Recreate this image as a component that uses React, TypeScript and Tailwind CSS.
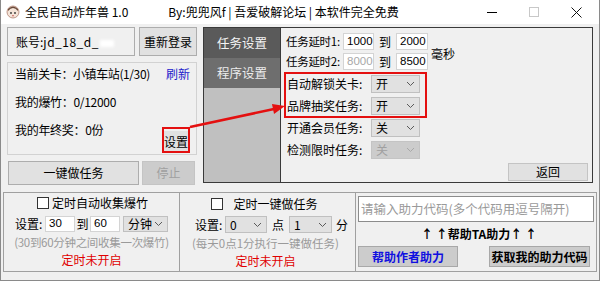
import React from "react";

const font = "font-['Noto_Sans_CJK_SC','Microsoft_YaHei',sans-serif]";

function Chevron({ color = "#606060" }: { color?: string }) {
  return (
    <svg width="9" height="6" viewBox="0 0 9 6">
      <polyline points="1,1 4.5,4.5 8,1" fill="none" stroke={color} strokeWidth="1" />
    </svg>
  );
}

function Select({ value, w, disabled }: { value: string; w: string; disabled?: boolean }) {
  return (
    <div
      className={`${w} h-full flex items-center justify-between pl-[4px] pr-[4px] border ${
        disabled ? "bg-[#cccccc] border-[#c4c4c4] text-[#a0a0a0]" : "bg-[#e1e1e1] border-[#c0c0c0] text-black"
      }`}
    >
      <span className="leading-none">{value}</span>
      <Chevron color={disabled ? "#a8a8a8" : "#5a5a5a"} />
    </div>
  );
}

function Input({ value, w, dim }: { value: string; w: string; dim?: boolean }) {
  return (
    <div
      className={`${w} h-full flex items-center pl-[3px] bg-white border border-[#d4d4d4] font-['Liberation_Sans',sans-serif] text-[11.5px] ${
        dim ? "text-[#a8a8a8]" : "text-black"
      }`}
    >
      {value}
    </div>
  );
}

function TitleBar() {
  return (
    <div className="h-[24px] bg-white flex items-center text-[12px]">
      <svg width="14" height="14" viewBox="0 0 14 14" className="ml-[5px]">
        <circle cx="7" cy="7" r="6" fill="#f4e4d8" stroke="#b08070" strokeWidth="0.8" />
        <path d="M2 6 Q7 0 12 6 L12 4 Q7 -1 2 4 Z" fill="#6a4a3a" />
        <circle cx="5" cy="8" r="0.9" fill="#333" />
        <circle cx="9" cy="8" r="0.9" fill="#333" />
        <path d="M6 10.5 Q7 11.5 8 10.5" stroke="#c04040" strokeWidth="0.8" fill="none" />
      </svg>
      <span className="ml-[5px] leading-none">全民自动炸年兽 1.0</span>
      <span className="ml-[40px] leading-none">By:兜兜风f | 吾爱破解论坛 | 本软件完全免费</span>
      <div className="ml-auto flex items-center h-full">
        <div className="w-[46px] flex justify-center">
          <div className="w-[10px] h-[1px] bg-black" />
        </div>
        <div className="w-[38px] flex justify-center">
          <div className="w-[10px] h-[10px] border border-[#c8c8c8]" />
        </div>
        <div className="w-[46px] flex justify-center">
          <svg width="11" height="11" viewBox="0 0 11 11">
            <path d="M0.5 0.5 L10.5 10.5 M10.5 0.5 L0.5 10.5" stroke="#111" strokeWidth="1" />
          </svg>
        </div>
      </div>
    </div>
  );
}

export default function App() {
  return (
    <div
      className={`relative w-[600px] h-[281px] overflow-hidden whitespace-nowrap bg-[#f0f0f0] border-x border-b border-[#8a8a8a] text-[12px] text-black ${font}`}
    >
      <TitleBar />

      {/* top section */}
      <div className="flex pt-[3px] pl-[6px] gap-[6px]">
        {/* left column */}
        <div className="w-[190px] flex flex-col">
          <div className="h-[29px] flex gap-[4px]">
            <div className="w-[128px] h-full flex items-center pl-[8px] border border-[#adadad] bg-[#f0f0f0]">
              <span className="leading-none">账号:</span>
              <span className="leading-none tracking-[0.5px]">jd_18_d_</span>
              <span className="w-[14px] h-[7px] bg-white blur-[1.5px] ml-[1px] mt-[4px]" />
            </div>
            <div className="w-[58px] h-full flex items-center justify-center bg-[#e1e1e1] border border-[#adadad]">
              重新登录
            </div>
          </div>

          <div className="mt-[6px] h-[93px] border border-[#d2d2d2] flex flex-col pl-[7px] pr-[6px] pt-[4px]">
            <div className="h-[14px] flex items-center justify-between leading-none">
              <span className="tracking-[-0.4px]">当前关卡：小镇车站(1/30)</span>
              <span className="text-[#2222cc]">刷新</span>
            </div>
            <div className="h-[14px] mt-[14px] flex items-center leading-none tracking-[-0.3px]">我的爆竹：0/12000</div>
            <div className="mt-[14px] flex items-start justify-between">
              <span className="h-[14px] flex items-center leading-none tracking-[-0.3px]">我的年终奖：0份</span>
              <div className="mt-[8px] mr-[2px] w-[24px] h-[21px] flex items-center justify-center bg-[#e1e1e1] leading-none">
                设置
              </div>
            </div>
          </div>

          <div className="mt-[6px] h-[24px] flex gap-[3px] pl-[1px]">
            <div className="w-[131px] h-full flex items-center justify-center bg-[#e1e1e1] border border-[#adadad]">
              一键做任务
            </div>
            <div className="w-[53px] h-full flex items-center justify-center bg-[#cccccc] border border-[#c4c4c4] text-[#a0a0a0]">
              停止
            </div>
          </div>
        </div>

        {/* settings panel */}
        <div className="w-[390px] h-[156px] flex border border-[#3a3a3a]">
          <div className="w-[77px] flex flex-col bg-[#c0c0c0] border-r border-[#3a3a3a]">
            <div className="h-[30px] flex items-center justify-center bg-[#5a5a5a] text-[#f4f4f4] text-[12.5px]">
              任务设置
            </div>
            <div className="h-[30px] flex items-center justify-center bg-[#6e6e6e] text-[#ececec] text-[12.5px]">
              程序设置
            </div>
          </div>
          <div className="flex-1 flex flex-col pl-[5px] pt-[5px] bg-[#f0f0f0]">
            <div className="flex">
              <div className="flex flex-col gap-[3px]">
                <div className="h-[17px] flex items-center">
                  <span className="w-[57px] leading-none text-[11.5px] tracking-[-0.3px]">任务延时1:</span>
                  <Input value="1000" w="w-[31px]" />
                  <span className="w-[22px] text-center leading-none">到</span>
                  <Input value="2000" w="w-[32px]" />
                </div>
                <div className="h-[17px] flex items-center">
                  <span className="w-[57px] leading-none text-[11.5px] tracking-[-0.3px]">任务延时2:</span>
                  <Input value="8000" w="w-[31px]" dim />
                  <span className="w-[22px] text-center leading-none">到</span>
                  <Input value="8500" w="w-[32px]" />
                </div>
              </div>
              <span className="self-center ml-[3px] mt-[4px] leading-none">毫秒</span>
            </div>
            <div className="mt-[5px] flex flex-col gap-[4px]">
              {[
                ["自动解锁关卡:", "开", false],
                ["品牌抽奖任务:", "开", false],
                ["开通会员任务:", "关", false],
                ["检测限时任务:", "关", true],
              ].map(([label, v, d]) => (
                <div key={label as string} className="h-[18px] flex items-center">
                  <span className="w-[85px] leading-none pl-[1px]">{label as string}</span>
                  <Select value={v as string} w="w-[49px]" disabled={d as boolean} />
                </div>
              ))}
            </div>
            <div className="mt-auto mb-[1px] self-end mr-[4px] w-[80px] h-[18px] flex items-center justify-center bg-[#e1e1e1] border border-[#c4c4c4]">
              返回
            </div>
          </div>
        </div>
      </div>

      {/* bottom section */}
      <div className="mx-[2px] mt-[7px] h-[80px] flex border border-[#a0a0a0]">
        {/* group 1 */}
        <div className="w-[176px] flex flex-col border-r border-[#a0a0a0]">
          <div className="mt-[3px] h-[14px] flex items-center justify-center gap-[3px] ml-[2px]">
            <div className="w-[12px] h-[12px] border border-[#333] bg-white" />
            <span className="leading-none">定时自动收集爆竹</span>
          </div>
          <div className="mt-[6px] h-[16px] flex items-center pl-[11px]">
            <span className="w-[30px] leading-none">设置:</span>
            <Input value="30" w="w-[30px]" />
            <span className="w-[15px] text-center leading-none">到</span>
            <Input value="60" w="w-[30px]" />
            <div className="ml-[3px] h-full">
              <Select value="分钟" w="w-[45px]" />
            </div>
          </div>
          <div className="mt-[4px] h-[14px] flex items-center justify-center text-[11.5px] text-[#9a9a9a] leading-none tracking-[-0.3px]">
            (30到60分钟之间收集一次爆竹)
          </div>
          <div className="mt-[3px] h-[14px] flex items-center justify-center text-[#e00000] leading-none">
            定时未开启
          </div>
        </div>

        {/* group 2 */}
        <div className="w-[176px] flex flex-col border-r border-[#a0a0a0]">
          <div className="mt-[4px] h-[14px] flex items-center justify-center gap-[10px] mr-[6px]">
            <div className="w-[12px] h-[12px] border border-[#333] bg-white" />
            <span className="leading-none">定时一键做任务</span>
          </div>
          <div className="mt-[5px] h-[17px] flex items-center pl-[15px]">
            <span className="w-[30px] leading-none">设置:</span>
            <Select value="0" w="w-[42px]" />
            <span className="w-[22px] text-center leading-none">点</span>
            <Select value="1" w="w-[43px]" />
            <span className="ml-[4px] leading-none">分</span>
          </div>
          <div className="mt-[4px] h-[14px] flex items-center justify-center text-[11.5px] text-[#9a9a9a] leading-none mr-[4px]">
            (每天0点1分执行一键做任务)
          </div>
          <div className="mt-[3px] h-[14px] flex items-center justify-center text-[#e00000] leading-none mr-[4px]">
            定时未开启
          </div>
        </div>

        {/* group 3 */}
        <div className="flex-1 flex flex-col px-[2px] pt-[3px]">
          <div className="h-[26px] flex items-center pl-[2px] bg-white border border-[#8c8c8c] text-[12.5px] text-[#9a9a9a] leading-none">
            请输入助力代码(多个代码用逗号隔开)
          </div>
          <div className="mt-[3px] h-[18px] flex items-center justify-center font-bold leading-none ml-[6px]">
            ↑ ↑帮助TA助力↑ ↑
          </div>
          <div className="mt-[3px] h-[21px] flex justify-between pr-[4px]">
            <div className="w-[100px] h-full flex items-center justify-center bg-[#cccccc] border border-[#a8a8a8] text-[#1010e0] font-bold">
              帮助作者助力
            </div>
            <div className="w-[101px] h-full flex items-center justify-center bg-[#cccccc] border border-[#a8a8a8] font-bold">
              获取我的助力代码
            </div>
          </div>
        </div>
      </div>

      {/* red annotations */}
      <svg className="absolute left-0 top-0 pointer-events-none" width="600" height="281">
        <rect x="162" y="128" width="26" height="24" fill="none" stroke="#e41010" strokeWidth="2" />
        <rect x="284" y="73" width="141" height="44" fill="none" stroke="#e41010" strokeWidth="2" />
        <line x1="189" y1="127" x2="273" y2="109" stroke="#e41010" strokeWidth="2.5" />
        <polygon points="284,106 271,104 273,114" fill="#e41010" />
      </svg>
    </div>
  );
}
